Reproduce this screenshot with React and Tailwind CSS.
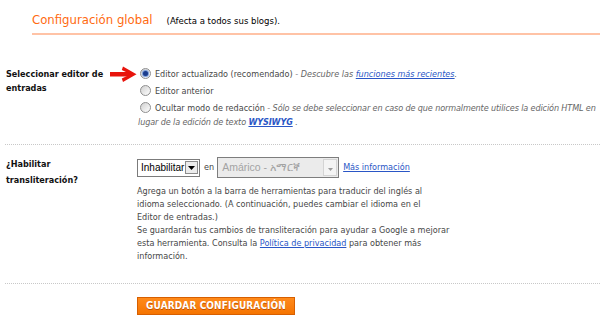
import React from "react";

function Radio({ checked }) {
  return (
    <span className="inline-block align-[-2px] ml-[2px] mr-[4px] w-[11px] h-[11px] rounded-full border border-[#8f8f8f] bg-gradient-to-br from-[#d0d0d0] to-[#ffffff] relative">
      {checked && (
        <span className="absolute left-[2px] top-[2px] w-[5px] h-[5px] rounded-full bg-[#1b3c8c] shadow-[0_0_1px_1px_#6f95d8]" />
      )}
    </span>
  );
}

function Arrow() {
  return (
    <svg width="27" height="16" viewBox="0 0 27 16" className="mr-[1px] mt-[0px] shrink-0">
      <rect x="0" y="6" width="21" height="4.5" fill="#e8140c" />
      <polygon points="13,0.5 26.5,8.25 13,16 11.8,12.6 20.5,8.25 11.8,3.9" fill="#e8140c" />
    </svg>
  );
}

export default function App() {
  const font = "font-['DejaVu_Sans_Condensed','DejaVu_Sans','Noto_Sans',sans-serif]";
  return (
    <div className={`w-[600px] h-[328px] bg-white overflow-hidden ${font} text-[9px] text-[#474747]`}>
      {/* Header */}
      <div className="ml-[32px] pt-[12px] pb-[4px] border-b-2 border-[#ffc3a6] flex items-baseline">
        <span className="text-[#ff6a10] text-[13px] leading-[16px]">Configuración global</span>
        <span className="ml-[14px] text-[9.5px] text-black leading-[16px]">(Afecta a todos sus blogs).</span>
      </div>

      {/* Section 1 */}
      <div className="ml-[5px] pl-[1px] pt-[31px] pb-[15px] border-b border-dotted border-[#c8c8c8] flex">
        <div className="w-[132px] shrink-0 flex items-start">
          <div className="font-bold text-[#111] leading-[14px] text-[9px] w-[104px] pt-[1px]">
            Seleccionar editor de
            <br />
            entradas
          </div>
          <div className="ml-auto">
            <Arrow />
          </div>
        </div>
        <div className="flex-1 min-w-0">
          <div className="leading-[17px] whitespace-nowrap">
            <Radio checked />
            Editor actualizado (recomendado)
            <span className="italic text-[#666]">
              {" - Descubre las "}
              <a className="text-[#2a56c6] underline">funciones más recientes</a>.
            </span>
          </div>
          <div className="leading-[17px] whitespace-nowrap">
            <Radio />
            Editor anterior
          </div>
          <div className="leading-[14px] whitespace-nowrap pt-[1px]">
            <Radio />
            Ocultar modo de redacción
            <span className="italic text-[#666] tracking-[-0.12px]">
              {" - Sólo se debe seleccionar en caso de que normalmente utilices la edición HTML en"}
              <br />
              {"lugar de la edición de texto "}
              <a className="text-[#2a56c6] underline font-bold">WYSIWYG</a>
              {" ."}
            </span>
          </div>
        </div>
      </div>

      {/* Section 2 */}
      <div className="ml-[5px] pl-[1px] pt-[12px] pb-[20px] border-b border-dotted border-[#c8c8c8] flex">
        <div className="w-[131px] shrink-0 font-bold text-[#111] leading-[16px] text-[9px] -mt-[1px]">
          ¿Habilitar
          <br />
          transliteración?
        </div>
        <div className="flex-1 min-w-0">
          <div className="flex items-center h-[21px]">
            <div className="w-[63px] h-[18px] border border-[#7b7b7b] bg-white flex items-center pl-[3px] font-['Liberation_Sans',Arial,sans-serif] text-[10px] text-black">
              Inhabilitar
              <span className="ml-auto mr-[1px] w-[13px] h-[13px] border border-[#8c8c8c] bg-[#ececec] flex items-center justify-center">
                <svg width="7" height="4" viewBox="0 0 7 4">
                  <polygon points="0,0 7,0 3.5,4" fill="#000" />
                </svg>
              </span>
            </div>
            <span className="ml-[4px] mr-[3px] text-[#444]">en</span>
            <div className="w-[122px] h-[21px] border border-[#7d7d7d] bg-[#ebebeb] flex items-stretch font-['Liberation_Sans',Arial,sans-serif] text-[10.5px] text-[#a3a3a3]">
              <span className="pl-[4px] flex items-center whitespace-nowrap overflow-hidden">Amárico - አማርኛ</span>
              <span className="ml-auto w-[14px] my-[1px] mr-[1px] border border-[#d4d4d4] bg-[#f4f4f4] flex items-end justify-center pb-[4px]">
                <svg width="5" height="3" viewBox="0 0 5 3">
                  <polygon points="0,0 5,0 2.5,3" fill="#9c9c9c" />
                </svg>
              </span>
            </div>
            <a className="ml-[4px] text-[#2a56c6] underline whitespace-nowrap">Más información</a>
          </div>
          <div className="mt-[7px] leading-[13px] whitespace-nowrap">
            Agrega un botón a la barra de herramientas para traducir del inglés al
            <br />
            idioma seleccionado. (A continuación, puedes cambiar el idioma en el
            <br />
            Editor de entradas.)
            <br />
            Se guardarán tus cambios de transliteración para ayudar a Google a mejorar
            <br />
            esta herramienta. Consulta la{" "}
            <a className="text-[#2a56c6] underline">Política de privacidad</a> para obtener más
            <br />
            información.
          </div>
        </div>
      </div>

      {/* Button */}
      <div className="pl-[137px] pt-[13px]">
        <button className="h-[18px] w-[158px] border border-[#d75f00] bg-gradient-to-b from-[#ff8a1a] to-[#f57400] text-white font-bold text-[10px] leading-[16px] tracking-[0.1px] [text-shadow:0_1px_0_#c05000]">
          GUARDAR CONFIGURACIÓN
        </button>
      </div>
    </div>
  );
}
